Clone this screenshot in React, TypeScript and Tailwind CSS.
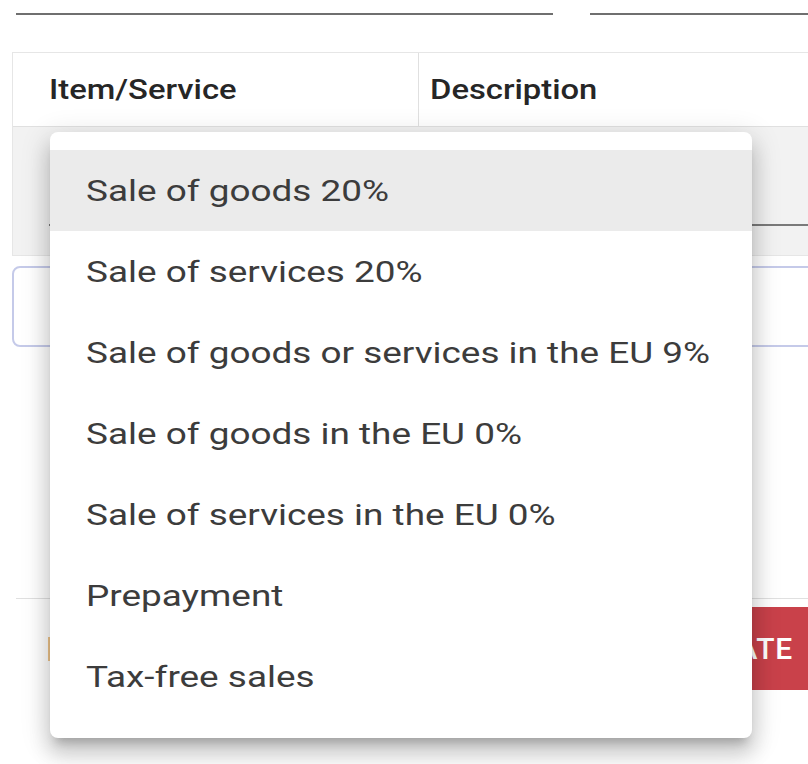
import React from "react";

const options = [
	"Sale of goods 20%",
	"Sale of services 20%",
	"Sale of goods or services in the EU 9%",
	"Sale of goods in the EU 0%",
	"Sale of services in the EU 0%",
	"Prepayment",
	"Tax-free sales",
];

export default function App() {
	return (
		<div className="relative w-[808px] h-[764px] overflow-hidden bg-white font-['Roboto',sans-serif]">
			{/* top inputs */}
			<div className="flex pt-[13px]">
				<div className="ml-[16px] w-[537px] border-b-2 border-[#6f6f6f]" />
				<div className="ml-[37px] flex-1 border-b-2 border-[#6f6f6f]" />
			</div>

			{/* table */}
			<div className="ml-[12px] mt-[37px] w-[830px] border border-[#e6e6e6]">
				<div className="flex h-[74px] items-center border-b border-[#e0e0e0] text-[28px] font-medium text-[#262626]">
					<div className="w-[406px] h-full flex items-center pl-[36px] border-r border-[#e0e0e0]">
						<span className="inline-block origin-left scale-x-[1.17]">Item/Service</span>
					</div>
					<div className="pl-[11px]">
						<span className="inline-block origin-left scale-x-[1.17]">Description</span>
					</div>
				</div>
				<div className="h-[128px] bg-[#f2f2f2] pt-[97px]">
					<div className="ml-[36px] border-b-2 border-[#7a7a7a]" />
				</div>
			</div>

			{/* outlined field */}
			<div className="ml-[12px] mt-[10px] w-[830px] h-[81px] rounded-[8px] border-2 border-[#c5cae9]" />

			{/* footer */}
			<div className="ml-[16px] mt-[251px] border-t border-[#e0e0e0]" />
			<div className="flex items-center justify-between mt-[8px]">
				<span className="ml-[48px] w-[2px] h-[24px] bg-[#efc58a]" />
				<button className="mr-[-30px] h-[83px] pl-[40px] pr-[45px] bg-[#c9414a] text-white text-[30px] font-medium tracking-wide">
					CREATE
				</button>
			</div>

			{/* dropdown menu */}
			<div className="absolute left-[50px] top-[132px] w-[702px] h-[606px] rounded-[8px] bg-white py-[18px] shadow-[0_10px_10px_-6px_rgba(0,0,0,0.2),0_16px_20px_2px_rgba(0,0,0,0.14),0_6px_28px_4px_rgba(0,0,0,0.12)]">
				{options.map((o, i) => (
					<div
						key={o}
						className={`h-[81px] flex items-center pl-[36px] text-[30px] text-[#3c3c3c] ${i === 0 ? "bg-[#ebebeb]" : ""}`}
					>
						<span className="inline-block origin-left scale-x-[1.23]">{o}</span>
					</div>
				))}
			</div>
		</div>
	);
}
